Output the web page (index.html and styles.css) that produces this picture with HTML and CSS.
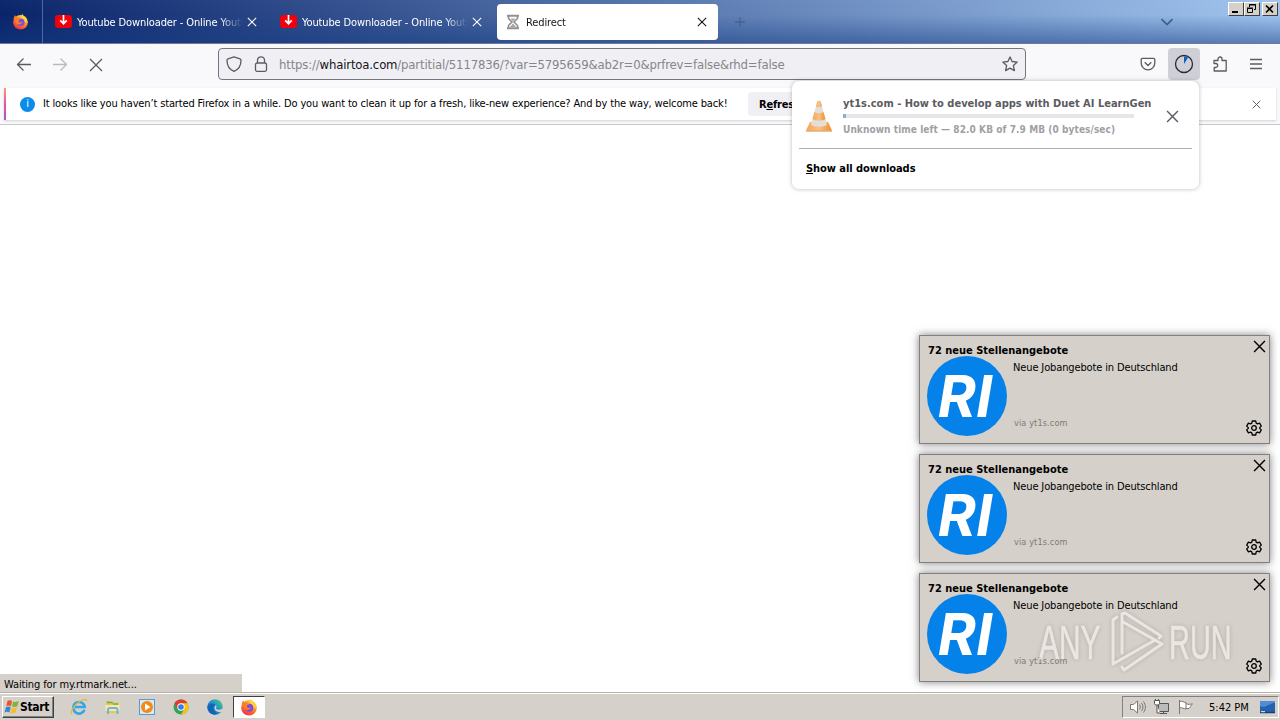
FILE: index.html
```html
<!DOCTYPE html>
<html lang="en">
<head>
    <meta charset="UTF-8">
    <meta name="viewport" content="width=device-width, initial-scale=1.0">
    <title>Redirect</title>
    <link rel="stylesheet" href="styles.css">
</head>
<body>
    <!-- Shared icons -->
    <svg class="sprite" width="0" height="0">
        <defs>
            <linearGradient id="fox-body" x1="0.8" y1="0" x2="0.2" y2="1">
                <stop offset="0" stop-color="#ffe14a"/>
                <stop offset="0.45" stop-color="#ff8a1f"/>
                <stop offset="1" stop-color="#f0204e"/>
            </linearGradient>
            <linearGradient id="edge-body" x1="0" y1="1" x2="1" y2="0">
                <stop offset="0" stop-color="#0c59a4"/>
                <stop offset="0.5" stop-color="#1b8fd8"/>
                <stop offset="1" stop-color="#4fd46a"/>
            </linearGradient>
            <linearGradient id="cone" x1="0" y1="0" x2="1" y2="0">
                <stop offset="0" stop-color="#f6a64d"/>
                <stop offset="0.5" stop-color="#fbc183"/>
                <stop offset="1" stop-color="#ee8f2c"/>
            </linearGradient>
        </defs>
        <symbol id="x" viewBox="0 0 12 12">
            <path d="M1 1l10 10M11 1L1 11" fill="none" stroke="currentColor" stroke-width="1.3"/>
        </symbol>
        <symbol id="firefox" viewBox="0 0 18 18">
            <circle cx="9" cy="9.8" r="7.8" fill="url(#fox-body)"/>
            <path d="M11 .3c0 2 1 2.7 2.6 4.3 1.5 1.6 2.3 3.3 2.2 5.6L12 9 9.500 4.500z" fill="#ffd43c"/>
            <path d="M1.500 6.500L3 2.200l1.600 2.200L8 4z" fill="#ff7a28"/>
            <circle cx="9.300" cy="9.800" r="4" fill="#7a4ce0"/>
            <path d="M4.300 5.200c2-.6 3.800-.1 5 1.400-1.500 0-2.300.8-2.300 1.800 0 1.500 2 2.200 4 1.200-.8 2.600-4.200 3.400-6.200 1.400C3.300 9.500 3.300 7 4.300 5.200z" fill="#ff7d24"/>
        </symbol>
        <symbol id="download-tab" viewBox="0 0 17 13">
            <rect width="17" height="13" rx="3" fill="#f0000c"/>
            <path d="M8.500 0v8M5.200 5.300l3.300 3.400 3.300-3.400" fill="none" stroke="#fff" stroke-width="1.700"/>
        </symbol>
        <symbol id="gear" viewBox="0 0 16 16">
            <path d="M6.300 1h3.400l.5 2.100 1.300.8 2.100-.7 1.700 2.900L13.700 7.600v.8l1.600 1.500-1.700 2.900-2.100-.7-1.300.8-.5 2.100H6.300l-.5-2.100-1.300-.8-2.100.7L.7 9.900l1.600-1.500v-.8L.7 6.100l1.700-2.900 2.100.7 1.300-.8z" fill="none" stroke="currentColor" stroke-width="1.300" stroke-linejoin="round"/>
            <circle cx="8" cy="8" r="2.300" fill="none" stroke="currentColor" stroke-width="1.300"/>
        </symbol>
    </svg>

    <header class="tab-bar">
        <div class="pinned-tab"><svg width="17" height="17"><use href="#firefox"/></svg></div>
        <div class="tab">
            <svg class="favicon" width="17" height="13"><use href="#download-tab"/></svg>
            <span class="tab-title">Youtube Downloader - Online Youtu</span>
            <svg width="10" height="10"><use href="#x"/></svg>
        </div>
        <div class="tab">
            <svg class="favicon" width="17" height="13"><use href="#download-tab"/></svg>
            <span class="tab-title">Youtube Downloader - Online Youtu</span>
            <svg width="10" height="10"><use href="#x"/></svg>
        </div>
        <div class="tab active">
            <svg class="favicon" width="16" height="16" viewBox="0 0 16 16" fill="none" stroke="#909090">
                <path d="M2 1.700h12M2 14.300h12" stroke-width="2"/>
                <path d="M3.500 2v2.500L7 8l-3.500 3.500V14M12.500 2v2.500L9 8l3.500 3.500V14" stroke-width="1.600"/>
                <path d="M5.500 4.500h5L8 7.200zM8 9.500l3 3.500H5z" fill="#a5a5a5" stroke="none"/>
            </svg>
            <span class="tab-title">Redirect</span>
            <svg width="10" height="10"><use href="#x"/></svg>
        </div>
        <svg class="new-tab" width="10" height="10" viewBox="0 0 10 10"><path d="M5 0v10M0 5h10" stroke="#3b5480" stroke-width="1.300"/></svg>
        <svg class="all-tabs" width="14" height="8" viewBox="0 0 14 8"><path d="M1.500 1.200L7 6.500l5.500-5.300" fill="none" stroke="#3f5f8d" stroke-width="1.700"/></svg>
        <div class="window-buttons">
            <span class="win-btn"><svg width="11" height="10"><path d="M2 8h6" stroke="#000" stroke-width="2"/></svg></span>
            <span class="win-btn"><svg width="11" height="10" fill="none" stroke="#000"><path d="M3.500 3V.5h6v5H8M3 1h7M1.500 4.500h5v4h-5zM1 4h6"/></svg></span>
            <span class="win-btn close"><svg width="11" height="10"><path d="M2 1.500l7 7M9 1.500l-7 7" stroke="#000" stroke-width="1.700"/></svg></span>
        </div>
    </header>

    <nav class="nav-bar">
        <div class="nav-buttons">
            <span class="tool"><svg width="16" height="16" viewBox="0 0 16 16"><path d="M15 8.500H1.500M7.500 2.500l-6 6 6 6"/></svg></span>
            <span class="tool disabled"><svg width="16" height="16" viewBox="0 0 16 16"><path d="M1 8.500h13.500M8.500 2.500l6 6-6 6"/></svg></span>
            <span class="tool"><svg width="16" height="16" viewBox="0 0 16 16"><path d="M2 3l12 12M14 3L2 15"/></svg></span>
        </div>
        <div class="url-bar">
            <svg width="16" height="16" viewBox="0 0 16 16"><path d="M8 .8l6 2c.8.300 1 .7 1 1.400C15 9.500 12.500 13.500 8 15.300 3.500 13.500 1 9.500 1 4.200c0-.7.200-1.100 1-1.400z"/></svg>
            <svg width="14" height="16" viewBox="0 0 14 16"><rect x="1.500" y="7" width="11" height="8.300" rx="1.500"/><path d="M3.500 7V4.300a3.500 3.500 0 0 1 7 0V7"/></svg>
            <span class="url">https://<b>whairtoa.com</b>/partitial/5117836/?var=5795659&amp;ab2r=0&amp;prfrev=false&amp;rhd=false</span>
            <svg width="16" height="16" viewBox="0 0 16 16"><path d="M8 .9l2.100 4.600 5.100.6-3.800 3.500 1 5L8 12.100l-4.400 2.500 1-5L.8 6.100l5.100-.6z"/></svg>
        </div>
        <div class="toolbar">
            <span class="tool"><svg width="16" height="16" viewBox="0 0 16 16"><path d="M2.500 2.300h11c.800 0 1.300.5 1.300 1.300v3.500a6.800 6.800 0 0 1-13.600 0V3.600c0-.8.500-1.300 1.300-1.300zM4.700 6.300L8 9.500l3.300-3.200"/></svg></span>
            <span class="tool open"><svg width="20" height="20" viewBox="0 0 20 20"><circle cx="10" cy="10" r="8.500"/><path class="pie" d="M10 10V2.500c1.600 0 2.900.5 4 1.200z"/></svg></span>
            <span class="tool"><svg width="16" height="18" viewBox="0 0 16 18"><path d="M2 5.500h4V4a2 2 0 0 1 4 0v1.500h4.200V16H2.200v-3.500h1.500a2 2 0 0 0 0-4H2z"/></svg></span>
            <span class="tool"><svg width="14" height="14" viewBox="0 0 14 14"><path d="M1 2.500h12M1 7h12M1 11.500h12"/></svg></span>
        </div>
    </nav>

    <div class="notice-bar">
        <div class="notice">
            <span class="info-icon">i</span>
            <span class="notice-text">It looks like you haven’t started Firefox in a while. Do you want to clean it up for a fresh, like-new experience? And by the way, welcome back!</span>
            <button class="refresh">R<u>e</u>fres</button>
            <svg class="notice-close" width="9" height="9"><use href="#x"/></svg>
        </div>
    </div>

    <main class="page">
        <div class="status">Waiting for my.rtmark.net...</div>
    </main>

    <footer class="taskbar">
        <div class="start">
            <svg width="16" height="16" viewBox="0 0 16 16">
                <path d="M3.500 2c1.600-.9 3-.9 4.500 0L7 7.200c-1.500-.9-3-.9-4.700 0z" fill="#e8562a"/>
                <path d="M9 2.400c1.600.8 3.200.8 5.800-.4l-1.500 5.300c-2 .9-3.600.9-5.200.2z" fill="#7cb53a"/>
                <path d="M2 8.200c1.600-.9 3.200-.9 4.700 0l-1.300 5.200c-1.500-.9-3-.9-4.900 0z" fill="#3c83d2"/>
                <path d="M7.800 8.500c1.600.8 3.200.8 5.200-.2l-1.500 5.300c-1.900.9-3.500.9-5 .1z" fill="#f5bd2d"/>
            </svg>
            <span>Start</span>
        </div>
        <div class="quick-launch">
            <svg width="18" height="18" viewBox="0 0 18 18">
                <path d="M14.500 11.800A5.800 5.800 0 1 1 14.800 9H5" fill="none" stroke="#35a7e5" stroke-width="2.500"/>
                <path d="M2 16C-.5 14.500 4 7 9.500 3.500 13 1.300 17 .3 16.700 3.300" fill="none" stroke="#e9b83a" stroke-width="1.300"/>
            </svg>
            <svg width="18" height="18" viewBox="0 0 18 18">
                <path d="M2 3h5l1 1.500h7V15H2z" fill="#e9c562"/>
                <path d="M3 4.500h6M9 6h5" stroke="#6bb04c" stroke-width="1.500"/>
                <path d="M1.500 7h14v6h-14z" fill="#fae7a1"/>
                <path d="M4 16v-4c0-1.500 1-2 2-2h5.500c1.200 0 2 .7 2 2v4" fill="none" stroke="#67b8e2" stroke-width="2"/>
            </svg>
            <svg width="18" height="18" viewBox="0 0 18 18">
                <rect x="1.500" y="1.500" width="15" height="15" fill="#d9e9f6" stroke="#579bd0"/>
                <circle cx="9" cy="9" r="6" fill="#f18a16"/>
                <path d="M7 5.500L12.500 9 7 12.500z" fill="#fff"/>
            </svg>
            <svg width="18" height="18" viewBox="0 0 18 18">
                <circle cx="9" cy="9" r="7.500" fill="#34a353"/>
                <path d="M2.500 5.250A7.500 7.500 0 0 1 15.500 5.250H9L5.750 11z" fill="#e33b2e"/>
                <path d="M15.500 5.250A7.500 7.500 0 0 1 9 16.500l3.300-5.600L9 5.250z" fill="#fbc116"/>
                <circle cx="9" cy="9" r="3.700" fill="#fff"/>
                <circle cx="9" cy="9" r="2.800" fill="#3b7de8"/>
            </svg>
            <svg width="18" height="18" viewBox="0 0 18 18">
                <circle cx="9" cy="9" r="7.700" fill="url(#edge-body)"/>
                <path d="M1.500 9C2 5.500 7 4.500 9.500 7c-3 1-3.500 6 2 8.500-4.500 2.500-10-.5-10-6.500z" fill="#1264b5"/>
                <path d="M9.800 7.300c1.500 1 .2 2.600.2 3.200 0 1 3.500 1.800 6 .3l1.500 1.700c-1.500 1.800-5 2.200-7.500.5-2-1.500-2-4.500-.2-5.700z" fill="#d6d0ca"/>
            </svg>
            <span class="task-active"><svg width="18" height="18"><use href="#firefox"/></svg></span>
        </div>
        <div class="tray">
            <svg width="17" height="16" viewBox="0 0 17 16" fill="none" stroke="#777">
                <path d="M1.500 5.500h3l4-3.500v12l-4-3.500h-3z" fill="#fff"/>
                <path d="M10.500 5.500c1 1.500 1 3.500 0 5M12.500 4c2 2.500 2 5.500 0 8M14.500 2.500c2.500 3.500 2.500 7.500 0 11"/>
            </svg>
            <svg width="17" height="16" viewBox="0 0 17 16" stroke="#555">
                <path d="M5.500 4.500h10v8h-10z" fill="#bbb"/>
                <path d="M7 14.500h7M10.500 12.500v2M1.500 1.500h5v3l-1 1.500h-3l-1-1.500zM4 6v8h3M2.500 0v2M5.500 0v2" fill="#fff"/>
            </svg>
            <svg width="17" height="16" viewBox="0 0 17 16" fill="#fff" stroke="#777">
                <path d="M2.500 1v14M2.500 2.500c3-1 4 1 6.500 1V10c-2.500 0-3.500-2-6.500-1zM9 4.500c2 1.500 4 .5 6.500.5-2 1.500-2 3-3.500 4.500H9"/>
            </svg>
            <span class="clock">5:42 PM</span>
            <svg width="15" height="13" viewBox="0 0 15 13">
                <rect width="15" height="11" fill="#2462b0"/>
                <path d="M0 11V5c5 3 9-3 15-3V0H0z" fill="#4f8dd5"/>
                <path d="M0 11.500h15" stroke="#153e75" stroke-width="1.500"/>
                <path d="M1 10.700h4" stroke="#dfe" stroke-width="1"/>
            </svg>
        </div>
    </footer>

    <!-- Downloads panel -->
    <div class="downloads">
        <div class="download-item">
            <svg class="cone" width="26" height="32" viewBox="0 0 26 32">
                <path d="M4 22h18l4 8.500H0z" fill="url(#cone)"/>
                <path d="M0 30.500h26v1H0z" fill="#d9822c"/>
                <path d="M11.300 1.500c.5-1 2.900-1 3.400 0L21 24.500c-2.500 3-13.500 3-16 0z" fill="#e2dedb"/>
                <path d="M11.300 1.500c.5-1 2.900-1 3.400 0l1.400 5c-1.500 1-4.700 1-6.200 0zM8.500 12c2 1.500 7 1.500 9 0l1.900 7c-3 2-9.800 2-12.800 0z" fill="url(#cone)"/>
            </svg>
            <div class="download-info">
                <div class="download-name">yt1s.com - How to develop apps with Duet AI LearnGen</div>
                <div class="progress"><div class="progress-fill" style="width: 1%"></div></div>
                <div class="download-details">Unknown time left — 82.0 KB of 7.9 MB (0 bytes/sec)</div>
            </div>
            <svg class="cancel" width="13" height="13"><use href="#x"/></svg>
        </div>
        <div class="show-all"><u>S</u>how all downloads</div>
    </div>

    <!-- Desktop notifications -->
    <div class="toasts">
        <div class="toast">
            <div class="toast-title">72 neue Stellenangebote</div>
            <div class="toast-body">
                <div class="logo"><span>RI</span></div>
                <div class="toast-text">
                    <span>Neue Jobangebote in Deutschland</span>
                    <span class="source">via yt1s.com</span>
                </div>
            </div>
            <div class="toast-actions">
                <svg width="13" height="13"><use href="#x"/></svg>
                <svg class="gear" width="16" height="16"><use href="#gear"/></svg>
            </div>
        </div>
        <div class="toast">
            <div class="toast-title">72 neue Stellenangebote</div>
            <div class="toast-body">
                <div class="logo"><span>RI</span></div>
                <div class="toast-text">
                    <span>Neue Jobangebote in Deutschland</span>
                    <span class="source">via yt1s.com</span>
                </div>
            </div>
            <div class="toast-actions">
                <svg width="13" height="13"><use href="#x"/></svg>
                <svg class="gear" width="16" height="16"><use href="#gear"/></svg>
            </div>
        </div>
        <div class="toast">
            <div class="toast-title">72 neue Stellenangebote</div>
            <div class="toast-body">
                <div class="logo"><span>RI</span></div>
                <div class="toast-text">
                    <span>Neue Jobangebote in Deutschland</span>
                    <span class="source">via yt1s.com</span>
                </div>
            </div>
            <div class="toast-actions">
                <svg width="13" height="13"><use href="#x"/></svg>
                <svg class="gear" width="16" height="16"><use href="#gear"/></svg>
            </div>
        </div>
    </div>

    <div class="watermark">
        <span class="mark-any">ANY</span>
        <svg width="56" height="62" viewBox="0 0 56 62" fill="none" stroke="#f1eeea" stroke-width="3" stroke-linecap="round" stroke-linejoin="round">
            <path d="M8 6L4 9v44L46 29"/>
            <path d="M13 42V3l3-1 36 23-2 2"/>
            <path d="M14 11l39 22-38 26-2-3"/>
        </svg>
        <span class="mark-run">RUN</span>
    </div>
</body>
</html>
```
FILE: styles.css
```css
:root {
    --win-grey: #d6d0ca;
    --toolbar: #f9f9fb;
    --icon: #5b5b66;
}
* {
    box-sizing: border-box;
}
body {
    margin: 0;
    width: 1280px;
    height: 720px;
    overflow: hidden;
    position: relative;
    display: flex;
    flex-direction: column;
    background: #fff;
    color: #000;
    font-family: 'DejaVu Sans Condensed', 'DejaVu Sans', sans-serif;
    font-stretch: condensed;
    font-size: 11px;
    line-height: 14px;
}
svg {
    display: block;
    flex: none;
}
.sprite {
    position: absolute;
}

/* Tabs */
.tab-bar {
    height: 44px;
    flex: none;
    display: flex;
    align-items: center;
    background: linear-gradient(to bottom, rgba(255,255,255,0.02), rgba(0,20,90,0.0) 35%, rgba(20,60,130,0.5)), linear-gradient(to right, #0a246a, #a0c4ee);
    border-bottom: 1px solid #70799a;
    color: #fff;
}
.pinned-tab {
    width: 43px;
    height: 43px;
    padding-left: 12px;
    display: flex;
    align-items: center;
    border-right: 1px solid #5068a0;
    margin-right: 4px;
}
.tab {
    width: 221px;
    height: 36px;
    margin-right: 4px;
    padding: 0 11px 0 8px;
    display: flex;
    align-items: center;
    gap: 5px;
    border-radius: 4px;
}
.tab-title {
    flex: 1;
    overflow: hidden;
    white-space: nowrap;
    padding-top: 3px;
    letter-spacing: -0.12px;
    mask-image: linear-gradient(to right, #000 142px, transparent 166px);
}
.tab.active {
    background: #fff;
    color: #15141a;
}
.new-tab {
    margin-left: 13px;
    opacity: 0.6;
}
.all-tabs {
    margin-left: auto;
}
.window-buttons {
    align-self: flex-start;
    display: flex;
    margin: 2px 2px 0 54px;
}
.win-btn {
    width: 16px;
    height: 14px;
    padding: 1px;
    background: var(--win-grey);
    border: 1px solid;
    border-color: #fff #404040 #404040 #fff;
}
.win-btn.close {
    margin-left: 2px;
}

/* Navigation */
.nav-bar {
    height: 40px;
    flex: none;
    display: flex;
    align-items: center;
    padding: 0 8px;
    background: var(--toolbar);
}
.nav-bar svg {
    fill: none;
    stroke: var(--icon);
    stroke-width: 1.3;
    stroke-linejoin: round;
}
.nav-buttons, .toolbar {
    display: flex;
    gap: 4px;
}
.tool {
    width: 32px;
    height: 32px;
    display: flex;
    align-items: center;
    justify-content: center;
    border-radius: 4px;
}
.tool.disabled {
    opacity: 0.4;
}
.tool.open {
    background: #cfcfd8;
}
.tool.open svg {
    stroke: #2b2a33;
}
.tool .pie {
    fill: #0560c4;
    stroke: none;
}
.url-bar {
    width: 808px;
    height: 32px;
    margin-left: 106px;
    margin-right: auto;
    padding: 0 7px;
    display: flex;
    align-items: center;
    gap: 12px;
    background: #f0f0f4;
    border: 1px solid #75757e;
    border-radius: 4px;
}
.url {
    flex: 1;
    margin-left: -1px;
    padding-top: 2px;
    font-size: 13px;
    letter-spacing: -0.17px;
    color: #85858c;
}
.url b {
    font-weight: normal;
    color: #15141a;
}

/* Refresh notice */
.notice-bar {
    height: 41px;
    flex: none;
    padding: 4px;
    background: var(--toolbar);
    border-bottom: 1px solid #c8c8cc;
}
.notice {
    height: 32px;
    display: flex;
    align-items: center;
    padding-left: 14px;
    padding-right: 15px;
    background: #fff;
    border-left: 2px solid;
    border-image: linear-gradient(#f9a27a, #e3569d, #a45ad0) 1;
    box-shadow: 0 1px 2px rgba(58,57,68,0.2);
}
.info-icon {
    width: 15px;
    height: 15px;
    margin-right: 8px;
    border-radius: 50%;
    background: #0b8ce9;
    color: #fff;
    text-align: center;
}
.notice-text {
    width: 705px;
    white-space: nowrap;
    letter-spacing: -0.145px;
}
.refresh {
    width: 110px;
    height: 24px;
    padding: 1px 11px 0;
    border: 0;
    border-radius: 4px;
    background: #f0f0f4;
    font: inherit;
    font-weight: bold;
    letter-spacing: -0.2px;
    text-align: left;
}
.notice-close {
    margin-left: auto;
    color: var(--icon);
}

/* Page */
.page {
    flex: 1;
    display: flex;
    align-items: flex-end;
}
.status {
    width: 242px;
    height: 18px;
    padding: 4px 4px 0;
    letter-spacing: -0.13px;
    background: var(--win-grey);
}

/* Taskbar */
.taskbar {
    height: 28px;
    flex: none;
    display: flex;
    align-items: center;
    padding: 1px 0 0 2px;
    background: var(--win-grey);
    border-top: 1px solid #b5b1a9;
    box-shadow: inset 0 1px #fff;
}
.start {
    width: 52px;
    height: 22px;
    display: flex;
    align-items: center;
    padding-left: 1px;
    border: 1px solid;
    border-color: #fff #404040 #404040 #fff;
    box-shadow: inset -1px -1px #808080;
    font-size: 12px;
    font-weight: bold;
    letter-spacing: -0.3px;
}
.quick-launch {
    display: flex;
    align-items: center;
    gap: 16px;
    margin-left: 16px;
}
.task-active {
    width: 32px;
    height: 22px;
    margin-left: -7px;
    display: flex;
    align-items: center;
    justify-content: center;
    background: #fff;
    border: 1px solid;
    border-color: #404040 #fff #fff #404040;
}
.tray {
    width: 157px;
    height: 22px;
    margin-left: auto;
    margin-right: 1px;
    display: flex;
    align-items: center;
    gap: 7px;
    padding-left: 6px;
    border: 1px solid;
    border-color: #808080 #fff #fff #808080;
}
.clock {
    width: 52px;
    margin-left: 8px;
    margin-right: -8px;
    padding-top: 1px;
    white-space: nowrap;
}

/* Downloads panel */
.downloads {
    position: absolute;
    left: 792px;
    top: 81px;
    width: 407px;
    height: 108px;
    padding: 8px 7px;
    background: #fff;
    border-radius: 7px;
    box-shadow: 0 0 4px rgba(58,57,68,0.35);
    font-weight: bold;
}
.download-item {
    height: 60px;
    display: flex;
    padding: 8px 13px 0 7px;
    border-bottom: 1px solid #b0b0b4;
}
.cone {
    margin-top: 3px;
}
.download-info {
    width: 315px;
    margin-left: 11px;
    white-space: nowrap;
}
.download-name {
    color: #5b5b60;
}
.progress {
    width: 291px;
    height: 4px;
    margin: 3px 0 5px;
    background: #e6e6e9;
}
.progress-fill {
    height: 100%;
    background: #7db4dc;
}
.download-details {
    font-size: 10px;
    letter-spacing: 0.08px;
    color: #a0a0a4;
}
.cancel {
    margin: 13px 0 0 auto;
    color: var(--icon);
}
.show-all {
    padding: 13px 8px 0 7px;
    letter-spacing: -0.05px;
}

/* Notifications */
.toasts {
    position: absolute;
    right: 10px;
    top: 335px;
    display: flex;
    flex-direction: column;
    gap: 10px;
}
.toast {
    width: 351px;
    height: 109px;
    display: grid;
    grid-template-columns: 1fr 20px;
    grid-template-rows: 13px 1fr;
    padding: 7px 4px 7px 7px;
    background: var(--win-grey);
    border: 1px solid #808080;
    box-shadow: 0 0 8px rgba(0,0,0,0.5);
}
.toast-title {
    padding: 1px 0 0 1px;
    font-weight: bold;
}
.toast-body {
    grid-row: 2;
    display: flex;
    gap: 6px;
}
.logo {
    width: 80px;
    height: 80px;
    padding-right: 4px;
    display: flex;
    align-items: center;
    justify-content: center;
    border-radius: 50%;
    background: #0582ea;
    color: #fff;
    font: italic bold 58px/80px 'Inter', sans-serif;
}
.toast-text {
    flex: 1;
    display: flex;
    flex-direction: column;
    justify-content: space-between;
    padding: 5px 0 6px;
    letter-spacing: -0.13px;
}
.source {
    padding-left: 1px;
    font-size: 9px;
    letter-spacing: 0.15px;
    color: #7d7a75;
}
.toast-actions {
    grid-column: 2;
    grid-row: 1 / 3;
    display: flex;
    flex-direction: column;
    justify-content: space-between;
    align-items: flex-end;
    margin: -3px -1px 0 0;
}
.gear {
    margin: 0 4px 0 0;
}

/* Watermark */
.watermark {
    position: absolute;
    left: 1039px;
    top: 611px;
    height: 62px;
    display: flex;
    align-items: center;
    color: #f1eeea;
    opacity: 0.75;
    font: 49px/62px 'Liberation Sans', sans-serif;
    -webkit-text-stroke: 0.6px #f1eeea;
    filter: drop-shadow(0 0 2px rgba(90,85,80,0.4));
}
.mark-any, .mark-run {
    width: 64px;
    transform: scaleX(0.61);
    transform-origin: left;
}
.mark-run {
    transform: scaleX(0.59);
}
.watermark svg {
    margin: 0 4px 0 6px;
}
```
